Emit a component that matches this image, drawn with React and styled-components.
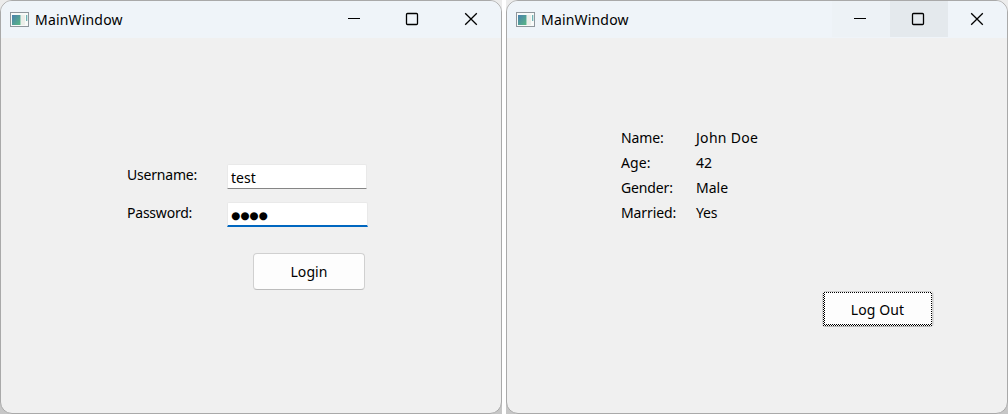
import React from "react";
import styled, { createGlobalStyle, css } from "styled-components";

const GlobalStyle = createGlobalStyle`
  * { box-sizing: border-box; }
  body { margin: 0; background: #fff; overflow: hidden; }
`;

const Desktop = styled.main`
  display: flex;
  gap: 4px;
  width: 1008px;
  height: 414px;
  font: 14px/20px "Noto Sans", sans-serif;
  color: #000;
`;

const Backdrop = styled.div`
  width: 502px;
  height: 414px;
  background: linear-gradient(#ececec, #ececec 50%, #c6c6c6);
`;

const Frame = styled.section`
  display: flex;
  flex-direction: column;
  height: 100%;
  border: 1px solid #a9a9a9;
  border-radius: 12px;
  overflow: hidden;
  background: #f0f0f0;
`;

const TitleBar = styled.header`
  display: flex;
  align-items: center;
  height: 37px;
  padding: 0 1px 0 9px;
  background: #eff4f9;
`;

const Title = styled.h1`
  flex: 1;
  margin: 0 0 0 5px;
  font-size: 14px;
  font-weight: 400;
  letter-spacing: 0.18px;
`;

const Caption = styled.button`
  display: flex;
  align-items: center;
  justify-content: center;
  width: 58px;
  height: 36px;
  align-self: flex-start;
  padding: 0 2px 0 0;
  border: 0;
  background: ${(p) => p.$bg || "transparent"};
`;

const CloseCaption = styled(Caption)`
  padding: 0;
`;

const Text = styled.span`
  white-space: nowrap;
  letter-spacing: ${(p) => p.$track || 0}px;
`;

const LoginForm = styled.form`
  display: flex;
  flex-direction: column;
  padding: 127px 0 0 126px;
`;

const Field = styled.label`
  display: grid;
  grid-template-columns: 100px 142px;
  height: 38px;
`;

const Input = styled.span`
  display: flex;
  align-items: center;
  width: 140px;
  height: 25px;
  margin-top: -1px;
  padding: 2px 0 0 3px;
  border: 1px solid #e9e9e9;
  border-bottom-color: #858585;
  border-radius: 2px 2px 0 0;
  background: #fff;
  ${(p) =>
    p.$focused &&
    css`
      width: 141px;
      border-bottom: 2px solid #0067c0;
    `}
`;

const Mask = styled(Text)`
  font-family: "DejaVu Sans", sans-serif;
  font-size: 10.5px;
`;

const PushButton = styled.button`
  width: ${(p) => p.$width}px;
  height: 37px;
  padding: 0;
  border: 1px solid #d0d0d0;
  border-bottom-color: #bcbcbc;
  border-radius: 4px;
  background: #fdfdfd;
  font: inherit;
  color: inherit;
`;

const LoginButton = styled(PushButton)`
  margin: 12px 0 0 126px;
`;

const Profile = styled.div`
  display: flex;
  flex-direction: column;
  padding: 90px 0 0 114px;
`;

const Details = styled.dl`
  display: grid;
  grid-template-columns: 75px 1fr;
  grid-auto-rows: 25px;
  margin: 0;
  dd { margin: 0; }
`;

const FocusedButton = styled(PushButton)`
  display: grid;
  height: 36px;
  margin: 63px 0 0 201px;
  box-shadow: 1px 0 0 #dcdcdc;
`;

const FocusRing = styled.span`
  display: grid;
  padding: 1px 1px 2px 2px;
  background: repeating-conic-gradient(#000 0 25%, #fff 0 50%) 0 0 / 2px 2px;
`;

const RingFace = styled.span`
  display: grid;
  place-items: center;
  padding: 2px 1px 0 0;
  background: #fdfdfd;
`;

function AppIcon() {
  return (
    <svg width="20" height="16" viewBox="0 0 20 16">
      <defs>
        <linearGradient id="tile" x1="0" y1="0" x2="1" y2="1">
          <stop stopColor="#4a7fae" />
          <stop offset="1" stopColor="#58b883" />
        </linearGradient>
      </defs>
      <rect x=".5" y=".5" width="18" height="14" fill="#f8faf9" stroke="#8f969c" />
      <rect x="2" y="3" width="8.5" height="10" fill="url(#tile)" />
      <path d="M11 3h4v10h-4z" fill="#eceee9" />
      <path d="M16 3h1.3v6H16z" fill="#6fb3b4" />
    </svg>
  );
}

const glyphs = {
  min: <path d="M1 6.5h12" />,
  max: <rect x="1.5" y="1.5" width="11" height="11" rx="1" />,
  close: <path d="M1.2 1.2l11.6 11.6M12.8 1.2L1.2 12.8" />,
};

function Glyph({ name }) {
  return (
    <svg width="14" height="14" viewBox="0 0 14 14" fill="none" stroke="#000" strokeWidth={name === "min" ? 1 : 1.3}>
      {glyphs[name]}
    </svg>
  );
}

function Window({ hovered, children }) {
  return (
    <Backdrop>
      <Frame>
        <TitleBar>
          <AppIcon />
          <Title>MainWindow</Title>
          <Caption aria-label="Minimize" $bg={hovered && "#edf2f6"}><Glyph name="min" /></Caption>
          <Caption aria-label="Maximize" $bg={hovered && "#e4e9ed"}><Glyph name="max" /></Caption>
          <CloseCaption aria-label="Close"><Glyph name="close" /></CloseCaption>
        </TitleBar>
        {children}
      </Frame>
    </Backdrop>
  );
}

const details = [
  ["Name:", "John Doe", -0.15, 0.3],
  ["Age:", "42", 0.1, 0],
  ["Gender:", "Male", -0.15, 0],
  ["Married:", "Yes", -0.12, -0.2],
];

export default function App() {
  return (
    <>
      <GlobalStyle />
      <Desktop>
        <Window>
          <LoginForm>
            <Field><Text $track={-0.2}>Username:</Text><Input><Text>test</Text></Input></Field>
            <Field><Text $track={-0.22}>Password:</Text><Input $focused><Mask>●●●●</Mask></Input></Field>
            <LoginButton type="button" $width={112}><Text $track={0.1}>Login</Text></LoginButton>
          </LoginForm>
        </Window>
        <Window hovered>
          <Profile>
            <Details>
              {details.map(([k, v, kt, vt]) => (
                <React.Fragment key={k}>
                  <dt><Text $track={kt}>{k}</Text></dt>
                  <dd><Text $track={vt}>{v}</Text></dd>
                </React.Fragment>
              ))}
            </Details>
            <FocusedButton $width={111}><FocusRing><RingFace><Text $track={0.1}>Log Out</Text></RingFace></FocusRing></FocusedButton>
          </Profile>
        </Window>
      </Desktop>
    </>
  );
}
